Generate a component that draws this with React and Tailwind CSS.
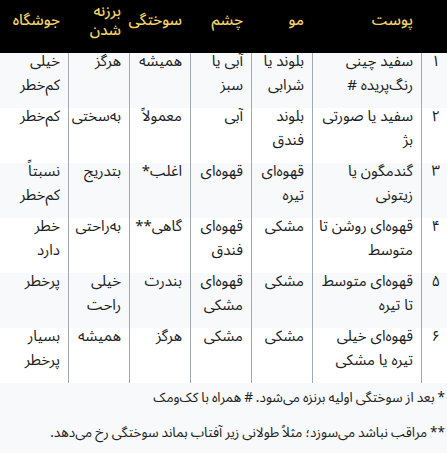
import React from "react";

const rows = [
  ["۱", ["سفید چینی", "رنگ‌پریده #"], ["بلوند یا", "شرابی"], ["آبی یا", "سبز"], ["همیشه"], ["هرگز"], ["خیلی", "کم‌خطر"]],
  ["۲", ["سفید یا صورتی", "بژ"], ["بلوند", "فندق"], ["آبی"], ["معمولاً"], ["به‌سختی"], ["کم‌خطر"]],
  ["۳", ["گندمگون یا", "زیتونی"], ["قهوه‌ای", "تیره"], ["قهوه‌ای"], ["اغلب*"], ["بتدریج"], ["نسبتاً", "کم‌خطر"]],
  ["۴", ["قهوه‌ای روشن تا", "متوسط"], ["مشکی"], ["قهوه‌ای", "فندق"], ["گاهی**"], ["به‌راحتی"], ["خطر", "دارد"]],
  ["۵", ["قهوه‌ای متوسط", "تا تیره"], ["مشکی"], ["قهوه‌ای", "مشکی"], ["بندرت"], ["خیلی", "راحت"], ["پرخطر"]],
  ["۶", ["قهوه‌ای خیلی", "تیره یا مشکی"], ["مشکی"], ["مشکی"], ["هرگز"], ["همیشه"], ["بسیار", "پرخطر"]],
];

const headers = [[""], ["پوست"], ["مو"], ["چشم"], ["سوختگی"], ["برزنه", "شدن"], ["جوشگاه"]];

const cols = "grid grid-cols-[26px_109px_61px_61px_61px_61px_1fr]";

const App = () => {
  return (
    <div
      dir="rtl"
      className="w-[447px] h-[453px] overflow-hidden bg-[#f8f9fa] text-[#202122]"
      style={{ fontFamily: '"Noto Sans Arabic", "Noto Sans", sans-serif' }}
    >
      <div className={`${cols} h-[53px] bg-black text-[#f3d264] font-medium text-[15px]`}>
        {headers.map((h, i) => (
          <div key={i} className="flex flex-col justify-center pb-[12px] pr-[8px] leading-[19px]">
            {h.map((t, j) => (
              <span key={j} className="whitespace-nowrap">{t}</span>
            ))}
          </div>
        ))}
      </div>

      {rows.map((r, i) => (
        <div
          key={i}
          className={`${cols} h-[55px] text-[15px] leading-[24px] ${i % 2 === 0 ? "bg-[#f8f9fa]" : "bg-white"}`}
        >
          <div className="border-l border-[#a2a9b1] pr-[7px]">
            <div className="-mt-[4px]">{r[0]}</div>
          </div>
          {r.slice(1).map((c, j) => (
            <div key={j} className={`pr-[8px] ${j < 5 ? "border-l border-[#a2a9b1]" : ""}`}>
              <div className="-mt-[4px]">
                {c.map((t, k) => (
                  <div key={k} className="whitespace-nowrap">{t}</div>
                ))}
              </div>
            </div>
          ))}
        </div>
      ))}

      <div className="pr-[2px] -mt-[3px] text-[13.5px] leading-[35px] [word-spacing:-0.5px]">
        <p className="whitespace-nowrap">* بعد از سوختگی اولیه برنزه می‌شود. # همراه با کک‌ومک</p>
        <p className="whitespace-nowrap">** مراقب نباشد می‌سوزد؛ مثلاً طولانی زیر آفتاب بماند سوختگی رخ می‌دهد.</p>
      </div>
    </div>
  );
};

export default App;
